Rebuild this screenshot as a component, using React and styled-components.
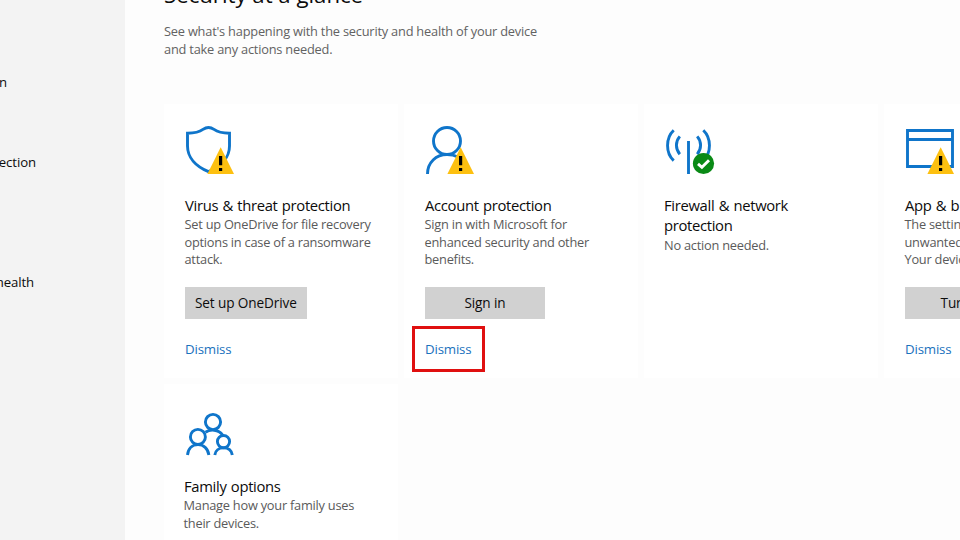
import React from "react";
import styled, { createGlobalStyle } from "styled-components";

const blue = "#0f75ca";

const GlobalStyle = createGlobalStyle`
  * { box-sizing: border-box; }
  body { margin: 0; overflow: hidden; }
`;

const Window = styled.div`
  display: flex;
  width: 960px;
  height: 540px;
  overflow: hidden;
  background: #fdfdfd;
  color: #0c0c0c;
  font-family: "Open Sans", "Noto Sans", sans-serif;
`;

const Sidebar = styled.nav`
  flex: 0 0 125px;
  background: #f3f3f3;
  padding-top: 62px;
`;

const NavItem = styled.div`
  display: flex;
  justify-content: flex-end;
  width: ${(p) => p.$end}px;
  height: 40px;
  margin-bottom: ${(p) => p.$after || 0}px;
  line-height: 40px;
  font-size: 13.2px;
  letter-spacing: -0.1px;
  white-space: nowrap;
  overflow: hidden;
`;

const Main = styled.main`
  flex: 1;
  min-width: 0;
  padding-left: 39px;
  overflow: hidden;
`;

const Heading = styled.h1`
  margin: -20px 0 0;
  height: 30px;
  font-size: 22.2px;
  line-height: 30px;
  font-weight: 400;
`;

const Intro = styled.p`
  margin: 12px 0 0;
  width: 385px;
  height: 36px;
  font-size: 12.8px;
  letter-spacing: -0.208px;
  line-height: 18px;
  color: #626262;
  white-space: nowrap;
`;

const CardGrid = styled.section`
  display: grid;
  grid-template-columns: repeat(4, 234px);
  grid-template-rows: 274px 274px;
  gap: 6px;
  margin-top: 46px;
`;

const Card = styled.article`
  display: flex;
  flex-direction: column;
  align-items: flex-start;
  padding: ${(p) => (p.$low ? 21 : 20)}px 0 0 ${(p) => (p.$low ? 20 : 21)}px;
  background: #fff;
`;

const Icon = styled.svg`
  display: block;
  flex: none;
  width: 50px;
  height: 50px;
  margin-left: ${(p) => (p.$flush ? 0 : -1)}px;
  overflow: visible;
  fill: none;
  stroke: ${blue};
  stroke-width: 2.9;
`;

const Title = styled.h2`
  margin: 21px 0 1px ${(p) => (p.$outdent ? -1 : 0)}px;
  font-size: 14.8px;
  letter-spacing: -0.32px;
  word-spacing: 0.8px;
  line-height: 20px;
  font-weight: 400;
  white-space: nowrap;
`;

const Description = styled.p`
  margin: ${(p) => (p.$outdent ? "0.5px 0 0 -1px" : "0 0 18.5px -0.5px")};
  font-size: 12.8px;
  letter-spacing: -0.24px;
  line-height: 17.5px;
  color: #5a5a5a;
  white-space: nowrap;
`;

const Button = styled.button`
  min-width: 120px;
  height: 32px;
  padding: 0 10px;
  border: 0;
  background: #d1d1d1;
  color: #0c0c0c;
  font-family: inherit;
  font-size: 13.6px;
  letter-spacing: -0.12px;
  line-height: 32px;
  white-space: nowrap;
`;

const DismissLink = styled.a`
  margin: 7px 0 0 -13px;
  width: 73px;
  height: 46px;
  padding-left: 10px;
  border: 3px solid ${(p) => (p.$marked ? "#e01010" : "transparent")};
  color: #1a72bd;
  font-size: 13.3px;
  letter-spacing: -0.18px;
  line-height: 40px;
`;

const WarningBadge = () => (
  <g stroke="none">
    <path d="M36.7 23.3 50 50H23.4Z" fill="#fdc010" />
    <path d="M35 32h3.2v9.2H35zM35 44h3.2v3H35z" fill="#000" />
  </g>
);

const ShieldIcon = () => (
  <Icon viewBox="0 0 50 50">
    <path d="M3.5 9.2C11 9.2 15.5 8 19 5.4C22.5 2.9 26.5 2.9 30 5.4C33.5 8 38 9.2 45.5 9.2V22C45.5 33.5 37 42.5 24.5 47.6C12 42.5 3.5 33.5 3.5 22Z" />
    <WarningBadge />
  </Icon>
);

const PersonIcon = () => (
  <Icon viewBox="0 0 50 50">
    <circle cx="23" cy="17" r="13.5" />
    <path d="M3.5 50C3.5 38.5 12 30.5 23 30.5C27 30.5 31 31.4 34 33" />
    <WarningBadge />
  </Icon>
);

const NetworkIcon = () => (
  <Icon viewBox="0 0 50 50">
    <path d="M24.5 17V50" />
    <path d="M9.7 6.2C1.5 14 1.5 28.8 9.7 36.6M39.3 6.2C47.5 14 47.5 28.8 39.3 36.6" />
    <path d="M15.8 12.4C11.3 17.6 11.3 25 15.8 30.2M33.2 12.4C37.7 17.6 37.7 25 33.2 30.2" />
    <circle cx="39.5" cy="39.5" r="10.6" fill="#0a8a16" stroke="none" />
    <path d="M34 39.8 37.9 43.3 45 36.2" stroke="#fff" />
  </Icon>
);

const BrowserIcon = () => (
  <Icon viewBox="0 0 50 50">
    <path d="M3.5 6.5H48.5V42.5H3.5ZM3.5 15.5H48.5" />
    <WarningBadge />
  </Icon>
);

const FamilyIcon = () => (
  <Icon viewBox="0 1 50 50" $flush>
    <circle cx="29" cy="18" r="7.6" />
    <circle cx="13.9" cy="32.9" r="7.5" />
    <circle cx="39.5" cy="37.6" r="6.1" />
    <path d="M21.5 28.2C26 25 34.5 25.2 38.6 31" />
    <path d="M3.5 51C4.2 44.5 8.5 40.6 14 40.6S24 44.5 24.9 51" />
    <path d="M30.8 51C31.3 46.6 34.8 43.9 39.5 43.9S47.6 46.6 48.3 51" />
  </Icon>
);

const navItems = [
  { label: "Virus & threat protection", end: 7, after: 40 },
  { label: "Firewall & network protection", end: 36, after: 80 },
  { label: "Device performance & health", end: 34 },
];

const cards = [
  {
    icon: ShieldIcon,
    title: ["Virus & threat protection"],
    text: ["Set up OneDrive for file recovery", "options in case of a ransomware", "attack."],
    action: "Set up OneDrive",
  },
  {
    icon: PersonIcon,
    title: ["Account protection"],
    text: ["Sign in with Microsoft for", "enhanced security and other", "benefits."],
    action: "Sign in",
    marked: true,
  },
  {
    icon: NetworkIcon,
    title: ["Firewall & network", "protection"],
    text: ["No action needed."],
    outdent: true,
  },
  {
    icon: BrowserIcon,
    title: ["App & browser control"],
    text: ["The setting to block potentially", "unwanted apps is turned off.", "Your device may be vulnerable."],
    action: "Turn on",
  },
  {
    icon: FamilyIcon,
    title: ["Family options"],
    text: ["Manage how your family uses", "their devices."],
    low: true,
  },
];

const Lines = ({ items }) =>
  items.map((line, i) => (
    <React.Fragment key={line}>
      {i > 0 && <br />}
      {line}
    </React.Fragment>
  ));

export default function App() {
  return (
    <Window>
      <GlobalStyle />
      <Sidebar>
        {navItems.map((n) => (
          <NavItem key={n.label} $end={n.end} $after={n.after}>
            {n.label}
          </NavItem>
        ))}
      </Sidebar>
      <Main>
        <Heading>Security at a glance</Heading>
        <Intro>
          See what's happening with the security and health of your device
          <br />
          and take any actions needed.
        </Intro>
        <CardGrid>
          {cards.map(({ icon: CardIcon, title, text, action, marked, low, outdent }) => (
            <Card key={title[0]} $low={low}>
              <CardIcon />
              <Title $outdent={outdent}><Lines items={title} /></Title>
              <Description $outdent={outdent}><Lines items={text} /></Description>
              {action && <Button>{action}</Button>}
              {action && <DismissLink $marked={marked}>Dismiss</DismissLink>}
            </Card>
          ))}
        </CardGrid>
      </Main>
    </Window>
  );
}
